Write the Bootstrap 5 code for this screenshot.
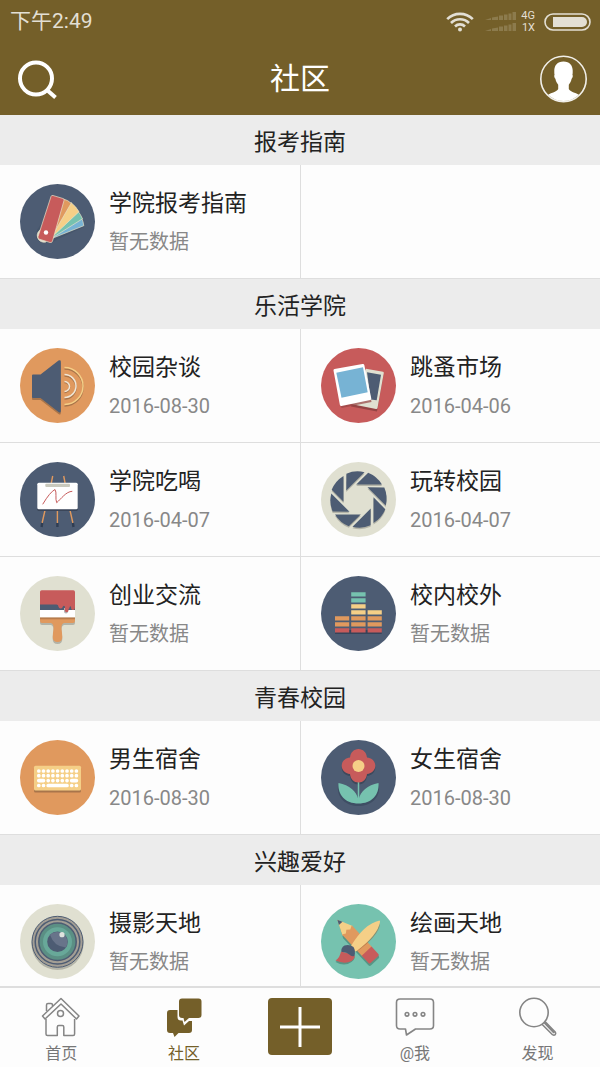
<!DOCTYPE html>
<html lang="zh-CN">
<head>
<meta charset="utf-8">
<meta name="viewport" content="width=device-width, initial-scale=1">
<title>社区</title>
<link href="https://cdn.jsdelivr.net/npm/bootstrap@5.3.0/dist/css/bootstrap.min.css" rel="stylesheet">
<style>
  :root { --brand: #745f29; --line: #dedede; }
  body { font-family: Roboto, "Noto Sans CJK SC", sans-serif; color: #222; background: #fdfdfd; }
  svg { display: block; flex: none; }
  .brand-bar { background: var(--brand); color: #fff; }
  .status { height: 42px; padding: 1px 9px 0 10px; font-size: 21px; color: #e3dfd4; }
  .signal { margin: 0 4px 0 11px; }
  .net-label { font-size: 11px; line-height: 12px; }
  .title-bar { height: 73px; padding: 0 12px; }
  .title-bar h1 { font-size: 30px; line-height: 40px; }
  .plain-btn { background: none; border: 0; padding: 0; color: inherit; }
  .feed { scrollbar-width: none; }
  .feed::-webkit-scrollbar { display: none; }
  .group-title { height: 50px; line-height: 50px; padding-top: 3px; font-size: 23px; background: #ececec; }
  .board { height: 114px; padding-left: 20px; gap: 14px; border-bottom: 1px solid var(--line); color: inherit; }
  .board:nth-child(even) { border-left: 1px solid var(--line); }
  .board-name { font-size: 23px; line-height: 34px; }
  .board-date { font-size: 20px; line-height: 30px; color: #888; margin-top: 6px; }
  .tabs { height: 81px; padding-right: 1px; border-top: 2px solid var(--line); background: #fdfdfd; }
  .tab { flex: 1 1 0; color: #777; font-size: 16px; line-height: 24px; padding-top: 9px; gap: 5px; }
  .tab.active { color: var(--brand); }
  .tab-add { width: 108px; padding-top: 10px; }
  .add-btn { width: 64px; height: 57px; border-radius: 4px; background: var(--brand); }
</style>
</head>
<body>
<div class="d-flex flex-column vh-100">

  <header class="brand-bar flex-shrink-0">
    <div class="status d-flex align-items-center justify-content-between">
      <span>下午2:49</span>
      <div class="d-flex align-items-center">
        <svg width="28" height="20" viewBox="0 0 28 20" fill="none" stroke="#e3dfd4" stroke-width="2.6"><path d="M1.200 7.200a18 18 0 0 1 25.600 0M5 11a12.600 12.600 0 0 1 18 0M9 14.500a7 7 0 0 1 10 0"/><circle cx="14" cy="17.600" r="2" fill="#e3dfd4" stroke="none"/></svg>
        <svg class="signal" width="32" height="20" viewBox="0 0 32 20" fill="#8c7b4d"><path id="bars" d="M0 8l6-2v2zM7 5.500l6-1V8H7zM14 3.500h4V8h-4zM19 2.500h3.500V8H19zM23.500 1.500h3V8h-3zM27.500 0H31v8h-3.500z"/><use href="#bars" y="11"/></svg>
        <div class="net-label text-end">4G<br>1X</div>
        <svg class="ms-2" width="48" height="18" viewBox="0 0 48 18"><rect x="2" y="1" width="45" height="16" rx="8" fill="none" stroke="#e3dfd4" stroke-width="1.600"/><path d="M10 4H39a5 5 0 0 1 0 10H10z" fill="#e3dfd4"/></svg>
      </div>
    </div>
    <div class="title-bar d-flex align-items-center justify-content-between">
      <button class="plain-btn" type="button" aria-label="搜索">
        <svg width="48" height="44" viewBox="0 0 48 44" fill="none" stroke="#fff" stroke-width="4"><circle cx="24" cy="21.500" r="16"/><path d="M35 33l8.500 7.500"/></svg>
      </button>
      <h1 class="m-0 fw-normal">社区</h1>
      <button class="plain-btn" type="button" aria-label="个人中心">
        <svg width="48" height="48" viewBox="0 0 48 48"><circle cx="23.500" cy="24" r="22.700" fill="none" stroke="#f1efe9" stroke-width="1.600"/><path d="M23.500 6.500c6.500 0 9.500 4.500 9.200 10 0 1.500 0 2.500-.3 3.300.8.800.2 3.200-.8 4-.5 2.800-1.700 4.500-2.800 6v4.200c1.500 3 6.500 3.500 10.100 5.800a22 22 0 0 1-30.800 0c3.600-2.300 8.600-2.800 10.100-5.800v-4.200c-1.100-1.500-2.300-3.200-2.800-6-1-.8-1.600-3.200-.8-4-.3-.8-.3-1.800-.3-3.300-.3-5.500 2.700-10 9.200-10z" fill="#fff"/></svg>
      </button>
    </div>
  </header>

  <main class="feed flex-grow-1 overflow-auto">
    <section>
      <h2 class="group-title m-0 text-center fw-normal">报考指南</h2>
      <div class="row g-0">
        <a href="#" class="board col-6 d-flex align-items-center text-decoration-none">
          <svg width="75" height="75" viewBox="0 0 75 75"><circle cx="37.500" cy="37.500" r="37.500" fill="#4d5c73"/><path d="M17 46l-1 8 5 5 12-1 5-3 26-12-8-13-12-12-11 4z" fill="#35445a" opacity=".3"/><g stroke="#e6e2c8" stroke-width=".7"><path d="M22 45a6 6 0 1 0 4 13z" fill="#e0e0d1"/><path d="M24 50L61.500 33.500a32 32 0 0 1 2.300 8.200L33 54z" fill="#77b3d4"/><path d="M24 50L57.500 26.500a32 32 0 0 1 5 8.300L32 54z" fill="#76c2af"/><path d="M24 50L51 18.500a32 32 0 0 1 8 9.200L31 54z" fill="#f5cf87"/><path d="M24 50L43.500 15q4 1 7.700 4.200L31 54z" fill="#e0995e"/><path d="M31 12.500q.5-1.500 2-1L43 14.500q1.500.500 1 2L32.500 57q-.5 2-2.500 1.500l-10.500-3.300q-2-.7-1.500-2.500z" fill="#c75b5b"/></g><circle cx="26" cy="48.500" r="2.200" fill="#fff"/></svg>
          <div><div class="board-name">学院报考指南</div><div class="board-date">暂无数据</div></div>
        </a>
        <div class="board col-6"></div>
      </div>
    </section>

    <section>
      <h2 class="group-title m-0 text-center fw-normal">乐活学院</h2>
      <div class="row g-0">
        <a href="#" class="board col-6 d-flex align-items-center text-decoration-none">
          <svg width="75" height="75" viewBox="0 0 75 75"><circle cx="37.500" cy="37.500" r="37.500" fill="#e0995e"/><path d="M13 28.500h7.500L38.500 14.500q2.300-1 2.300 1V65q0 2.500-2.300 1L20.500 52H13q-1 0-1-1V29.500q0-1 1-1z" fill="#a8754b"/><path d="M13 26.500h7.500L38.500 12.500q2.300-1 2.300 1V63q0 2.500-2.300 1L20.500 50H13q-1 0-1-1V27.500q0-1 1-1z" fill="#4d5c73"/><g fill="none" stroke-width="1.500"><path d="M44.500 34.500a5 5 0 0 1 0 10M44.500 28a11.500 11.500 0 0 1 0 23M44.500 21a18.500 18.500 0 0 1 0 37" stroke="#a8754b"/><path d="M44.500 33.500a5 5 0 0 1 0 10M44.500 26.500a11.500 11.500 0 0 1 0 23" stroke="#f0e6d6"/><path d="M44.500 19.500a18.500 18.500 0 0 1 0 37" stroke="#f5cf87"/></g></svg>
          <div><div class="board-name">校园杂谈</div><div class="board-date">2016-08-30</div></div>
        </a>
        <a href="#" class="board col-6 d-flex align-items-center text-decoration-none">
          <svg width="75" height="75" viewBox="0 0 75 75"><circle cx="37.500" cy="37.500" r="37.500" fill="#c75b5b"/><path d="M45 23l17.500 3.500-6.500 37-26-5z" fill="#954444"/><path d="M45 20.700l17 3q1 .3.800 1.300l-6.300 35q-.3 1.300-1.500 1L30 56z" fill="#e0e0d1"/><path d="M46 24.300l14 2.500-4.300 25.500-6-.8z" fill="#4d5c73"/><path d="M13 24l30-6 7.500 36L20.500 60z" fill="#954444" opacity=".7"/><path d="M13.500 21l28-5q1.500-.3 1.800 1l7 33.500q.3 1.300-1 1.600L20.500 58q-1.300.2-1.600-1L12.500 22.500q-.2-1.300 1-1.500z" fill="#fff"/><path d="M15.300 24.700L42 19.300l4.700 24.900L20.500 49.700z" fill="#77b3d4"/></svg>
          <div><div class="board-name">跳蚤市场</div><div class="board-date">2016-04-06</div></div>
        </a>
        <a href="#" class="board col-6 d-flex align-items-center text-decoration-none">
          <svg width="75" height="75" viewBox="0 0 75 75"><circle cx="37.500" cy="37.500" r="37.500" fill="#4d5c73"/><g stroke-width="1.400" fill="none"><path d="M32.700 14l-1.400 7M43.700 14l1.400 7M25.300 47l-3.200 14M37.400 47v14M49.700 47l3.200 14" stroke="#e0995e"/><path d="M22.200 61l-.6 4M37.400 61v4M52.900 61l.6 4" stroke="#303d52" stroke-width="2.400"/></g><rect x="17.300" y="22.500" width="40.400" height="26.500" rx="1.500" fill="#3a4558"/><rect x="17.300" y="20.700" width="40.400" height="26.500" rx="1.500" fill="#fff"/><rect x="25.300" y="21.700" width="24.700" height="3.300" rx="1" fill="#c9c9bd"/><path d="M22.700 42.300Q30 30 35 27.500C37 30 35 37 36.700 40.700 41 37 46 29.500 52.300 29.300" fill="none" stroke="#c75b5b" stroke-width="1"/></svg>
          <div><div class="board-name">学院吃喝</div><div class="board-date">2016-04-07</div></div>
        </a>
        <a href="#" class="board col-6 d-flex align-items-center text-decoration-none">
          <svg width="75" height="75" viewBox="0 0 75 75"><defs><g id="iris"><path id="blade" d="M-2.300-15L9.700-26.800A28.300 28.300 0 0 1 23.500-15z"/><use href="#blade" transform="rotate(45)"/><use href="#blade" transform="rotate(90)"/><use href="#blade" transform="rotate(135)"/><use href="#blade" transform="rotate(180)"/><use href="#blade" transform="rotate(225)"/><use href="#blade" transform="rotate(270)"/><use href="#blade" transform="rotate(315)"/></g></defs><circle cx="37.500" cy="37.500" r="37.500" fill="#e0e0d1"/><use href="#iris" transform="translate(37.500 39)" fill="#b3b3a7"/><use href="#iris" transform="translate(37.500 37.500)" fill="#4d5c73"/></svg>
          <div><div class="board-name">玩转校园</div><div class="board-date">2016-04-07</div></div>
        </a>
        <a href="#" class="board col-6 d-flex align-items-center text-decoration-none">
          <svg width="75" height="75" viewBox="0 0 75 75"><circle cx="37.500" cy="37.500" r="37.500" fill="#e0e0d1"/><path d="M20 45h35v2q0 2-2 2H44q-3 1-2.500 6 .5 3 .8 8 0 5-4.800 5t-4.800-5q.3-5 .8-8 .500-5-2.500-6h-9q-2 0-2-2z" fill="#b3b3a7"/><path d="M20 43h35v2q0 2-2 2H44q-3 1-2.500 6 .5 3 .8 8 0 5-4.800 5t-4.800-5q.3-5 .8-8 .500-5-2.500-6h-9q-2 0-2-2z" fill="#e0995e"/><path d="M20 41.300h35v2H20z" fill="#b87c4c"/><path d="M20 34h35v7.300H20z" fill="#fff"/><path d="M20 28h35v6H20z" fill="#4d5c73"/><path d="M44 32h4v3.500a2 2 0 0 1-4 0z" fill="#b3b3b3"/><path d="M20 16q0-1.700 1.700-1.700h31.600q1.700 0 1.700 1.700v15q0 3-2 3t-2-3q-.3-1.500-1.500 0v1q-.5 1-1 1v1.500a1.800 1.800 0 0 1-3.600 0V30.500q-1-1.500-2 0-.7 2.500-2.500 2-1.600 0-2-2 0-2-2-2H20z" fill="#c75b5b"/></svg>
          <div><div class="board-name">创业交流</div><div class="board-date">暂无数据</div></div>
        </a>
        <a href="#" class="board col-6 d-flex align-items-center text-decoration-none">
          <svg width="75" height="75" viewBox="0 0 75 75"><circle cx="37.500" cy="37.500" r="37.500" fill="#4d5c73"/><path d="M14 54h46.700v4H14z" fill="#37445a"/><path d="M14 52.300h14.200v4.200H14zM30.200 52.300h14.400v4.200H30.200zM46.600 52.300h14.200v4.200H46.600z" fill="#c75b5b"/><path d="M14 46.300h14.200v4.200H14zM30.200 46.300h14.400v4.200H30.200zM46.600 46.300h14.200v4.200H46.600zM14 40.300h14.200v4.200H14zM30.200 40.300h14.400v4.200H30.200zM46.600 40.300h14.200v4.200H46.600z" fill="#e0995e"/><path d="M30.200 34.300h14.400v4.200H30.200zM46.600 34.300h14.200v4.200H46.600zM30.200 28.300h14.400v4.200H30.200z" fill="#f5cf87"/><path d="M30.200 22.300h14.400v4.200H30.200zM30.200 16.300h14.400v4.200H30.200z" fill="#76c2af"/></svg>
          <div><div class="board-name">校内校外</div><div class="board-date">暂无数据</div></div>
        </a>
      </div>
    </section>

    <section>
      <h2 class="group-title m-0 text-center fw-normal">青春校园</h2>
      <div class="row g-0">
        <a href="#" class="board col-6 d-flex align-items-center text-decoration-none">
          <svg width="75" height="75" viewBox="0 0 75 75"><circle cx="37.500" cy="37.500" r="37.500" fill="#e0995e"/><rect x="14" y="28" width="47" height="24.500" rx="1.500" fill="#a8754b"/><rect x="14" y="25.700" width="47" height="24.800" rx="1.500" fill="#f5cf87"/><path d="M18.800 31h.01M23.500 31h.01M28.200 31h.01M32.900 31h.01M37.600 31h.01M42.300 31h.01M47 31h.01M51.700 31h.01M56.400 31h.01M18.800 35.700h.01M23.500 35.700h.01M28.200 35.700h.01M32.900 35.700h.01M37.600 35.700h.01M42.300 35.700h.01M47 35.700h.01M51.700 35.700h.01M56.400 35.700h.01M18.800 40.600h4.700M28.200 40.600h.01M32.900 40.600h.01M37.600 40.600h.01M42.300 40.600h.01M47 40.600h.01M51.700 40.600h4.700M18.800 45.500h.01M23.500 45.500h.01M28.200 45.500H47M51.700 45.500h.01M56.400 45.500h.01" fill="none" stroke="#fff" stroke-linecap="round" stroke-width="3.700"/></svg>
          <div><div class="board-name">男生宿舍</div><div class="board-date">2016-08-30</div></div>
        </a>
        <a href="#" class="board col-6 d-flex align-items-center text-decoration-none">
          <svg width="75" height="75" viewBox="0 0 75 75"><defs><path id="bloom" d="M37.500 9c4.500 0 8 3.500 8.500 8.500 5 .5 8.300 4 8.300 8.300S51 33.500 46 34c-.5 5-4 8.500-8.500 8.500S29.500 39 29 34c-5-.5-8.300-4-8.300-8.200S24 18 29 17.500C29.500 12.500 33 9 37.500 9z"/></defs><circle cx="37.500" cy="37.500" r="37.500" fill="#4d5c73"/><path d="M17 45C15.500 59 26 66 37.500 66S59.500 59 58 45L37.500 62z" fill="#35445a" opacity=".6"/><path d="M17.500 43c11 2 18 8 20 17 2-9 9-15 20-17 1 12-7 20.500-20 20.500S16.500 55 17.500 43z" fill="#76c2af"/><use href="#bloom" y="2" fill="#3d495c"/><path d="M37.500 40v21" stroke="#76c2af" stroke-width="1.500"/><use href="#bloom" fill="#c75b5b"/><circle cx="37.500" cy="26" r="6" fill="#f5cf87"/></svg>
          <div><div class="board-name">女生宿舍</div><div class="board-date">2016-08-30</div></div>
        </a>
      </div>
    </section>

    <section>
      <h2 class="group-title m-0 text-center fw-normal">兴趣爱好</h2>
      <div class="row g-0">
        <a href="#" class="board col-6 d-flex align-items-center text-decoration-none">
          <svg width="75" height="75" viewBox="0 0 75 75"><circle cx="37.500" cy="37.500" r="37.500" fill="#e0e0d1"/><circle cx="37.500" cy="40" r="26" fill="#b3b3a7"/><circle cx="37.500" cy="37.800" r="25.500" fill="#a39e95" stroke="#4d5c73" stroke-width="1"/><circle cx="37.500" cy="37.800" r="22.300" fill="#a39e95" stroke="#4d5c73" stroke-width="1.500"/><circle cx="37.500" cy="37.800" r="18.700" fill="#5b8f84" stroke="#4d5c73" stroke-width="1.500"/><circle cx="37.500" cy="37.800" r="14.500" fill="#68a899"/><circle cx="37.500" cy="37.800" r="10.300" fill="#4d5c73"/><path d="M30 30.800a10.300 10.300 0 0 1 16 12.700Q34 43 30 30.800z" fill="#68748a"/><circle cx="42" cy="30.700" r="2.600" fill="#dfe3de"/></svg>
          <div><div class="board-name">摄影天地</div><div class="board-date">暂无数据</div></div>
        </a>
        <a href="#" class="board col-6 d-flex align-items-center text-decoration-none">
          <svg width="75" height="75" viewBox="0 0 75 75"><circle cx="37.500" cy="37.500" r="37.500" fill="#76c2af"/><path d="M2 0L16-7H53q2 0 2 2V5q0 2-2 2H16z" fill="#579585" transform="translate(16.300 17.700) rotate(47)"/><g transform="translate(16.300 15.700) rotate(47)"><path d="M0 0L15-7l4 7-4 7z" fill="#f5cf87"/><path d="M0 0l5-2.400v4.800z" fill="#4d5c73"/><path d="M14-6.700H44V6.700H14l2-3.500-2.500-3 2.500-3z" fill="#e0995e"/><path d="M43-6.700H53q1.500 0 1.500 1.500V5.200q0 1.500-1.500 1.500H43z" fill="#c75b5b"/></g><path d="M59 19.500Q58 32 35 48z" fill="#915f37" opacity=".5"/><path d="M58.500 16.500q.8.500.5 1.500-2 13-24 29.500-2.500 0-5-5.500Q43 20 58.500 16.500z" fill="#f5cf87"/><path d="M20 49q-1 6-5.500 9 9 5 16 0 4-3 3-6z" fill="#579585"/><path d="M20 47.500q-1 6-5.500 9 9 4 16 .5 4-3 3-6z" fill="#c75b5b"/><path d="M20.500 48q-1-4 3-6.500 5-1.500 9 1.500 2.500 4 .8 9-3 1-5-1.500-3-3-7.800-2.500z" fill="#4d5c73"/></svg>
          <div><div class="board-name">绘画天地</div><div class="board-date">暂无数据</div></div>
        </a>
      </div>
    </section>
  </main>

  <nav class="tabs d-flex flex-shrink-0">
    <a href="#" class="tab d-flex flex-column align-items-center text-decoration-none">
      <svg width="40" height="40" viewBox="0 0 40 40" fill="none" stroke="#858585" stroke-width="1.500" stroke-linejoin="round"><path d="M5.500 14V8q0-1.500 1.500-1.500h3q1.500 0 1.500 1.500v1M5 22v15q0 1.500 1.500 1.500h9.800V30q0-1.500 1.500-1.500h3.500q1.500 0 1.500 1.500v8.500h9.300q1.500 0 1.500-1.500V22"/><path d="M20 1.500l18 17.500-2.500 3L20 7 4 22l-2.500-3z"/><circle cx="19.500" cy="16.500" r="3"/></svg>
      <span>首页</span>
    </a>
    <a href="#" class="tab active d-flex flex-column align-items-center text-decoration-none" aria-current="page">
      <svg width="40" height="40" viewBox="0 0 40 40" fill="#745f29"><path d="M6 13h7.500v7q0 3.500 3.500 3.500h1.500l1.500 5 5-4.500H28v9q0 3-3 3H14.500l-4 4-1.500-4H6q-3 0-3-3V16q0-3 3-3z"/><path d="M18 1.500h16.500q3 0 3 3V18q0 3-3 3H25l-4.500 4-1-4H18q-3 0-3-3V4.500q0-3 3-3z"/></svg>
      <span>社区</span>
    </a>
    <div class="tab-add text-center">
      <button class="plain-btn add-btn" type="button" aria-label="发布">
        <svg class="mx-auto" width="42" height="42" viewBox="0 0 42 42" stroke="#fff" stroke-width="3"><path d="M21 1v40M1 21h40"/></svg>
      </button>
    </div>
    <a href="#" class="tab d-flex flex-column align-items-center text-decoration-none">
      <svg width="40" height="40" viewBox="0 0 40 40" fill="none" stroke="#858585" stroke-width="1.600" stroke-linejoin="round"><path d="M5 2h30q3.500 0 3.500 3.500v23q0 3.500-3.500 3.500H20.500L11.500 38l-1-6H5q-3.500 0-3.500-3.500v-23Q1.500 2 5 2z"/><circle cx="12" cy="17.300" r="1.800"/><circle cx="20" cy="17.300" r="1.800"/><circle cx="28" cy="17.300" r="1.800"/></svg>
      <span>@我</span>
    </a>
    <a href="#" class="tab d-flex flex-column align-items-center text-decoration-none">
      <svg width="40" height="40" viewBox="0 0 40 40" fill="none" stroke="#858585" stroke-width="1.600" stroke-linejoin="round"><circle cx="16" cy="15.500" r="14.200"/><path d="M24 27.200l10.500 10.500q1.500 1 2.700 0 1-1.300 0-2.700L27 24.500M26 25.500l10 10.500"/></svg>
      <span>发现</span>
    </a>
  </nav>
</div>
<script src="https://cdn.jsdelivr.net/npm/bootstrap@5.3.0/dist/js/bootstrap.bundle.min.js"></script>
</body>
</html>
